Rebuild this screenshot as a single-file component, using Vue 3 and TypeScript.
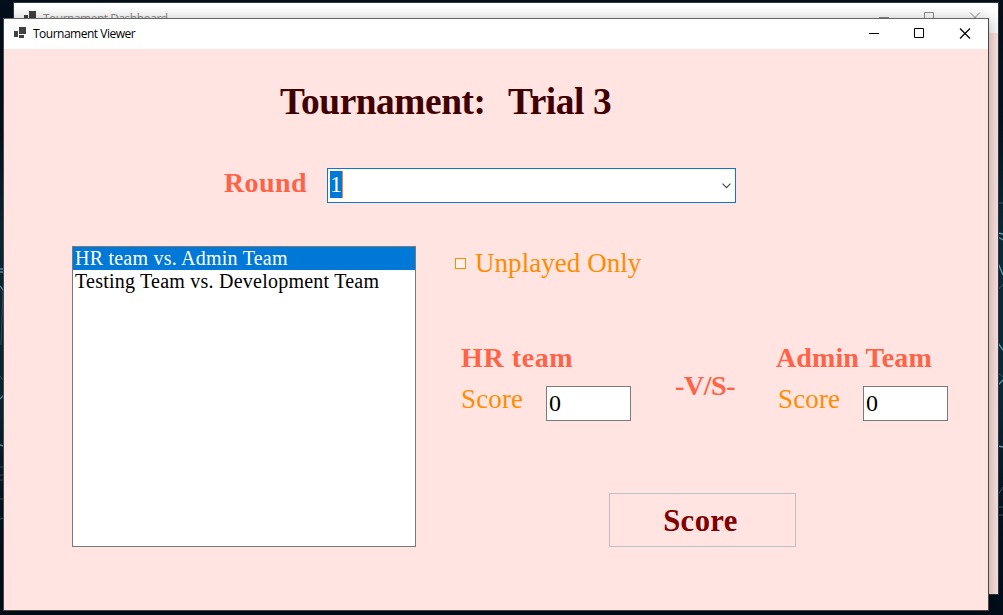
<script setup lang="ts">
import { ref } from 'vue'

interface Team {
  name: string
  score: string
}

const rounds: string[] = ['1']
const selectedRound = ref(rounds[0])
const matchups: string[] = ['HR team vs. Admin Team', 'Testing Team vs. Development Team']
const selectedMatchup = ref(0)
const unplayedOnly = ref(false)
const home = ref<Team>({ name: 'HR team', score: '0' })
const away = ref<Team>({ name: 'Admin Team', score: '0' })
</script>

<template>
  <div class="desktop">
    <svg class="wallpaper" width="1003" height="615" viewBox="0 0 1003 615" fill="none">
      <g stroke="#5e9db5" stroke-width="1.3">
        <path d="M998 233l5 1M998 237l5 3M998 263l5 12M998 343l5 7M998 385l5-5M998 446l5 1" />
        <path d="M0 269h4M0 272h4M0 286l4 5M0 399l4-4M0 445l4 1" />
      </g>
      <g stroke="#2f586c">
        <path d="M998 203h5M998 290l5-6M998 373l5 4M998 495l5-8M998 507h5M998 515h5" />
        <path d="M3 290L1 345M0 376l4 5M0 467h4M0 475h4M0 480h4M0 499h4M0 519l4-1" />
      </g>
    </svg>

    <div class="window back">
      <div class="titlebar">
        <svg class="app-icon" width="13" height="12" viewBox="0 0 13 12" shape-rendering="crispEdges">
          <path fill="#414141" d="M0 4h4v6H0zM5 0h7v7H5zM5 8h5v3H5z" />
        </svg>
        <span class="caption">Tournament Dashboard</span>
        <svg class="controls" width="102" height="11" viewBox="0 0 102 11" fill="none" stroke="currentColor">
          <path d="M0 5.5h10M45.5 .5h9v9h-9zM91 .5l10 10M101 .5l-10 10" />
        </svg>
      </div>
      <div class="back-body"></div>
    </div>

    <div class="window front">
      <div class="titlebar">
        <svg class="app-icon" width="13" height="12" viewBox="0 0 13 12" shape-rendering="crispEdges">
          <path fill="#414141" d="M0 4h4v6H0zM5 0h7v7H5zM5 8h5v3H5z" />
        </svg>
        <span class="caption">Tournament Viewer</span>
        <svg class="controls" width="102" height="11" viewBox="0 0 102 11" fill="none" stroke="currentColor">
          <path d="M0 5.5h10M45.5 .5h9v9h-9z" />
          <path stroke-width="1.2" d="M91 .5l10 10M101 .5l-10 10" />
        </svg>
      </div>

      <main class="form">
        <h1 class="heading"><span class="heading-label">Tournament:</span><span class="heading-name">Trial 3</span></h1>

        <div class="round-row">
          <span class="round-label">Round</span>
          <div class="combo">
            <span class="combo-value">{{ selectedRound }}</span>
            <svg class="chevron" width="9" height="6" viewBox="0 0 9 6" fill="none" stroke="#444" stroke-width="1.1">
              <path d="M.5 .7l4 4 4-4" />
            </svg>
          </div>
        </div>

        <div class="body-row">
          <ul class="matchups">
            <li
              v-for="(matchup, i) in matchups"
              :key="matchup"
              :class="['matchup', { selected: i === selectedMatchup }]"
              @click="selectedMatchup = i"
            >{{ matchup }}</li>
          </ul>

          <section class="details">
            <div class="unplayed" @click="unplayedOnly = !unplayedOnly">
              <span :class="['checkbox', { checked: unplayedOnly }]"></span>
              <span class="unplayed-label">Unplayed Only</span>
            </div>

            <div class="versus-row">
              <div class="team home">
                <div class="team-name">{{ home.name }}</div>
                <div class="score-row">
                  <span class="score-label">Score</span>
                  <div class="score-box">{{ home.score }}</div>
                </div>
              </div>
              <div class="versus">-V/S-</div>
              <div class="team away">
                <div class="team-name">{{ away.name }}</div>
                <div class="score-row">
                  <span class="score-label">Score</span>
                  <div class="score-box">{{ away.score }}</div>
                </div>
              </div>
            </div>

            <button class="score-button" type="button">Score</button>
          </section>
        </div>
      </main>
    </div>
  </div>
</template>

<style>
body {
  margin: 0;
  overflow: hidden;
}
</style>

<style scoped>
.desktop {
  position: relative;
  width: 1003px;
  height: 615px;
  overflow: hidden;
  background: linear-gradient(#03101c, #04121f 20%, #0c2a3c 38%, #0b283a 65%, #041423 82%, #020d19);
  font-family: "Liberation Serif", "Times New Roman", serif;
}
.wallpaper {
  position: absolute;
  left: 0;
  top: 0;
}
.window {
  position: absolute;
  box-sizing: border-box;
  overflow: hidden;
}
.back {
  left: 13px;
  top: 2px;
  width: 986px;
  height: 593px;
  border: 1px solid #32383c;
  background: #fff;
}
.back-body {
  height: 561px;
  background: #ffe4e1;
}
.front {
  left: 3px;
  top: 18px;
  width: 986px;
  height: 593px;
  border: 1px solid #4a4546;
  border-top-color: #666;
  background: #ffe4e1;
  box-shadow: 0 3px 14px 1px rgba(0, 0, 0, 0.3);
}
.titlebar {
  display: flex;
  height: 30px;
  background: #fff;
  color: #000;
}
.back .titlebar {
  color: #8a8a8a;
}
.app-icon {
  margin: 8px 0 0 10px;
}
.caption {
  margin-left: 6px;
  font: 12px/30px "Open Sans", "Noto Sans", sans-serif;
  letter-spacing: -0.5px;
}
.back .caption {
  line-height: 31px;
}
.controls {
  margin: 9px 17px 0 auto;
}
.form {
  display: flex;
  flex-direction: column;
  height: 561px;
}
.heading {
  display: flex;
  margin: 32px 0 0 276px;
  font-size: 37.33px;
  font-weight: 700;
  line-height: 41px;
  letter-spacing: -0.42px;
  color: #400000;
}
.heading-label {
  width: 228px;
}
.round-row {
  display: flex;
  margin: 46px 0 0 220px;
}
.round-label {
  width: 103px;
  font-size: 28px;
  font-weight: 700;
  line-height: 29px;
  letter-spacing: 0.4px;
  color: #ff6347;
}
.combo {
  display: flex;
  align-items: center;
  justify-content: space-between;
  box-sizing: border-box;
  width: 409px;
  height: 35px;
  padding: 0 4px 1px 2px;
  border: 1px solid #0f76cd;
  background: #fff;
}
.combo-value {
  width: 12px;
  height: 27px;
  margin-top: -1px;
  border-right: 1px solid #ff8728;
  background: #0078d7;
  color: #fff;
  font-size: 24px;
  line-height: 27px;
}
.chevron {
  margin-top: 2px;
}
.body-row {
  display: flex;
  margin: 43px 0 0 68px;
}
.matchups {
  box-sizing: border-box;
  width: 344px;
  height: 301px;
  margin: 0;
  padding: 0;
  border: 1px solid #7a7a7a;
  background: #fff;
  list-style: none;
}
.matchup {
  height: 23px;
  padding-left: 2px;
  font-size: 20px;
  line-height: 23px;
  letter-spacing: 0.23px;
  white-space: nowrap;
  color: #000;
}
.matchup.selected {
  background: #0078d7;
  color: #fff;
}
.details {
  display: flex;
  flex-direction: column;
  width: 540px;
}
.unplayed {
  display: flex;
  align-items: center;
  height: 34px;
  padding-left: 39px;
}
.checkbox {
  box-sizing: border-box;
  width: 11px;
  height: 11px;
  border: 1px solid #ff8c00;
  background: #fff0ee;
}
.checkbox.checked {
  background: #ff8c00;
}
.unplayed-label {
  margin-left: 9px;
  font-size: 27px;
  line-height: 34px;
  letter-spacing: 0.05px;
  color: #ff8c00;
}
.versus-row {
  display: flex;
  height: 80px;
  margin: 61px 0 0 45px;
}
.team {
  width: 172px;
}
.team-name {
  height: 45px;
  font-size: 28px;
  font-weight: 700;
  line-height: 34px;
  letter-spacing: 0.6px;
  color: #ff6347;
  white-space: nowrap;
}
.away .team-name {
  letter-spacing: 0.1px;
}
.score-row {
  display: flex;
}
.score-label {
  flex: none;
  width: 85px;
  font-size: 27px;
  line-height: 26px;
  letter-spacing: 0.15px;
  color: #ff8c00;
}
.score-box {
  flex: none;
  box-sizing: border-box;
  width: 85px;
  height: 35px;
  padding-left: 2px;
  border: 1px solid #7a7a7a;
  background: #fff;
  font-size: 24px;
  line-height: 32px;
}
.versus {
  width: 101px;
  margin-left: 42px;
  font-size: 28px;
  font-weight: 700;
  line-height: 90px;
  letter-spacing: -0.4px;
  color: #ff6347;
}
.away .score-row {
  margin-left: 2px;
}
.score-button {
  width: 187px;
  height: 54px;
  margin: 72px 0 0 193px;
  padding: 2px 4px 0 0;
  border: 1px solid #c0c0c0;
  background: transparent;
  font: 700 30.67px/50px "Liberation Serif", "Times New Roman", serif;
  letter-spacing: 0.4px;
  color: #800000;
}
</style>
